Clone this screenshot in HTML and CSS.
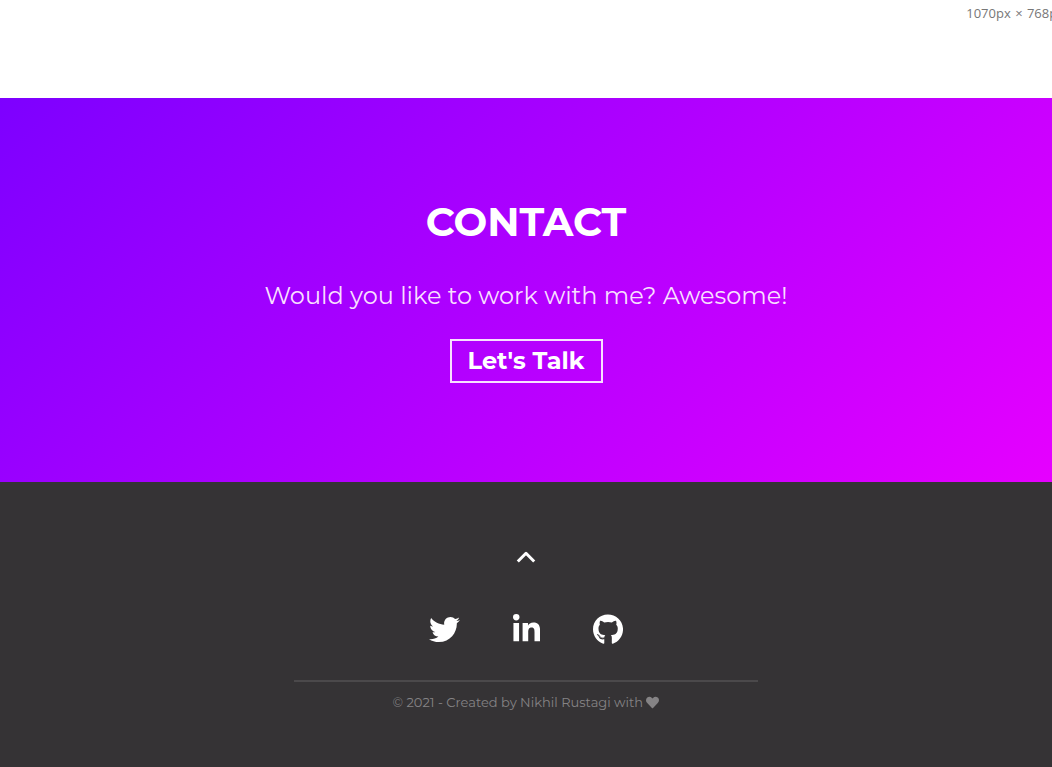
FILE: index.html
```html
<!DOCTYPE html>
<html lang="en">
<head>
<meta charset="utf-8">
<meta name="viewport" content="width=device-width, initial-scale=1">
<title>Contact</title>
<link rel="stylesheet" href="styles.css">
</head>
<body>
<header class="topbar"><span class="viewport-size">1070px <span class="times">×</span> 768px</span></header>
<section class="contact" id="contact">
  <h2 class="contact-title">CONTACT</h2>
  <p class="contact-text">Would you like to work with me? Awesome!</p>
  <a class="contact-button" href="#contact">Let's Talk</a>
</section>
<footer class="footer">
  <a class="to-top" href="#contact" aria-label="Back to top">
    <svg class="chevron" viewBox="0 0 20 14" aria-hidden="true"><path d="M1.8 11.5 10 3.3 18.2 11.5" fill="none" stroke="currentColor" stroke-width="3" stroke-linejoin="round"/></svg>
  </a>
  <nav class="social" aria-label="Social links">
    <a href="#twitter" aria-label="Twitter"><svg class="icon" viewBox="0 0 512 512"><path d="M459.37 151.716c.325 4.548.325 9.097.325 13.645 0 138.72-105.583 298.558-298.558 298.558-59.452 0-114.68-17.219-161.137-47.106 8.447.974 16.568 1.299 25.34 1.299 49.055 0 94.213-16.568 130.274-44.832-46.132-.975-84.792-31.188-98.112-72.772 6.498.974 12.995 1.624 19.818 1.624 9.421 0 18.843-1.3 27.614-3.573-48.081-9.747-84.143-51.98-84.143-102.985v-1.299c13.969 7.797 30.214 12.67 47.431 13.319-28.264-18.843-46.781-51.005-46.781-87.391 0-19.492 5.197-37.36 14.294-52.954 51.655 63.675 129.3 105.258 216.365 109.807-1.624-7.797-2.599-15.918-2.599-24.04 0-57.828 46.782-104.934 104.934-104.934 30.213 0 57.502 12.67 76.67 33.137 23.715-4.548 46.456-13.32 66.599-25.34-7.798 24.366-24.366 44.833-46.132 57.827 21.117-2.273 41.584-8.122 60.426-16.243-14.292 20.791-32.161 39.308-52.628 54.253z"/></svg></a>
    <a href="#linkedin" aria-label="LinkedIn"><svg class="icon" viewBox="0 0 448 512"><path d="M100.28 448H7.4V148.9h92.88zM53.79 108.1C24.09 108.1 0 83.5 0 53.8a53.79 53.79 0 0 1 107.58 0c0 29.7-24.1 54.3-53.79 54.3zM447.9 448h-92.68V302.4c0-34.7-.7-79.2-48.29-79.2-48.29 0-55.69 37.7-55.69 76.7V448h-92.78V148.9h89.08v40.8h1.3c12.4-23.5 42.69-48.3 87.88-48.3 94 0 111.28 61.9 111.28 142.3V448z"/></svg></a>
    <a href="#github" aria-label="GitHub"><svg class="icon" viewBox="0 0 496 512"><path d="M165.9 397.4c0 2-2.3 3.6-5.2 3.6-3.3.3-5.6-1.3-5.6-3.6 0-2 2.3-3.6 5.2-3.6 3-.3 5.6 1.3 5.6 3.6zm-31.1-4.5c-.7 2 1.3 4.3 4.3 4.9 2.6 1 5.6 0 6.2-2s-1.3-4.3-4.3-5.2c-2.6-.7-5.5.3-6.2 2.3zm44.2-1.7c-2.9.7-4.9 2.6-4.6 4.9.3 2 2.9 3.3 5.9 2.6 2.9-.7 4.9-2.6 4.6-4.6-.3-1.9-3-3.2-5.9-2.9zM244.8 8C106.1 8 0 113.3 0 252c0 110.9 69.8 205.8 169.5 239.2 12.8 2.3 17.3-5.6 17.3-12.1 0-6.2-.3-40.4-.3-61.4 0 0-70 15-84.7-29.8 0 0-11.4-29.1-27.8-36.6 0 0-22.9-15.7 1.6-15.4 0 0 24.9 2 38.6 25.8 21.9 38.6 58.6 27.5 72.9 20.9 2.3-16 8.8-27.1 16-33.7-55.9-6.2-112.3-14.3-112.3-110.5 0-27.5 7.6-41.3 23.6-58.9-2.6-6.5-11.1-33.3 2.6-67.9 20.9-6.5 69 27 69 27 20-5.6 41.5-8.5 62.8-8.5s42.8 2.9 62.8 8.5c0 0 48.1-33.6 69-27 13.7 34.7 5.2 61.4 2.6 67.9 16 17.7 25.8 31.5 25.8 58.9 0 96.5-58.9 104.2-114.8 110.5 9.2 7.9 17 22.9 17 46.4 0 33.7-.3 75.4-.3 83.6 0 6.5 4.6 14.4 17.3 12.1C428.2 457.8 496 362.9 496 252 496 113.3 383.5 8 244.8 8zM97.2 352.9c-1.3 1-1 3.3.7 5.2 1.6 1.6 3.9 2.3 5.2 1 1.3-1 1-3.3-.7-5.2-1.6-1.6-3.9-2.3-5.2-1zm-10.8-8.1c-.7 1.3.3 2.9 2.3 3.9 1.6 1 3.6.7 4.3-.7.7-1.3-.3-2.9-2.3-3.9-2-.6-3.6-.3-4.3.7zm32.4 35.6c-1.6 1.3-1 4.3 1.3 6.2 2.3 2.3 5.2 2.6 6.5 1 1.3-1.3.7-4.3-1.3-6.2-2.2-2.3-5.2-2.6-6.5-1zm-11.4-14.7c-1.6 1-1.6 3.6 0 5.9s4.3 3.3 5.6 2.3c1.6-1.3 1.6-3.9 0-6.2-1.4-2.3-4-3.3-5.6-2z"/></svg></a>
  </nav>
  <hr class="divider">
  <p class="credit">© 2021 - Created by Nikhil Rustagi with <svg class="heart" viewBox="0 0 512 512" role="img" aria-label="love"><path d="M462.3 62.6C407.5 15.9 326 24.3 275.7 76.2L256 96.5l-19.7-20.3C186.1 24.3 104.5 15.9 49.7 62.6c-62.8 53.6-66.1 149.8-9.9 207.9l193.5 199.8c12.5 12.9 32.8 12.9 45.3 0l193.5-199.8c56.3-58.1 53-154.3-9.8-207.9z"/></svg></p>
</footer>
</body>
</html>
```
FILE: styles.css
```css
* {
  box-sizing: border-box;
}

body {
  min-height: 100vh;
  margin: 0;
  display: flex;
  flex-direction: column;
  background: #fff;
  color: #fff;
  font-family: Montserrat, Inter, sans-serif;
}

.topbar {
  height: 98px;
  padding-top: 4px;
  overflow: hidden;
  display: flex;
  justify-content: flex-end;
}

.viewport-size {
  margin-right: -12px;
  color: #777;
  font: 13px/18px "Open Sans", sans-serif;
  white-space: nowrap;
}

.times {
  margin: 0 1px;
}

.contact {
  padding: 96px 16px 99px;
  display: flex;
  flex-direction: column;
  align-items: center;
  background: linear-gradient(135deg, #7d00ff, #e600ff);
  text-align: center;
}

.contact-title {
  margin: 0 0 30px;
  font-size: 40px;
  line-height: 56px;
  font-weight: 700;
}

.contact-text {
  margin: 0 0 27px;
  color: #f8dfff;
  font-size: 24px;
  line-height: 32px;
}

.contact-button {
  padding: 4px 16px;
  border: 2px solid #f8dfff;
  color: #fff;
  font-size: 24px;
  line-height: 32px;
  font-weight: 700;
  text-decoration: none;
}

.footer {
  flex: 1;
  padding: 68px 16px 56px;
  display: flex;
  flex-direction: column;
  align-items: center;
  background: #353335;
}

.to-top,
.social a {
  display: flex;
  color: #fff;
}

.chevron {
  width: 20px;
  height: 14px;
}

.social {
  margin: 50px 0 35px;
  display: flex;
  gap: 53px;
}

.icon {
  height: 31px;
  fill: currentColor;
}

.divider {
  width: 100%;
  max-width: 464px;
  margin: 0 0 10px;
  border: 0;
  border-top: 2px solid #4b494b;
}

.credit {
  margin: 0;
  color: #858385;
  font-size: 13px;
  line-height: 20px;
}

.heart {
  width: 13px;
  height: 13px;
  fill: currentColor;
  vertical-align: -2px;
}
```
